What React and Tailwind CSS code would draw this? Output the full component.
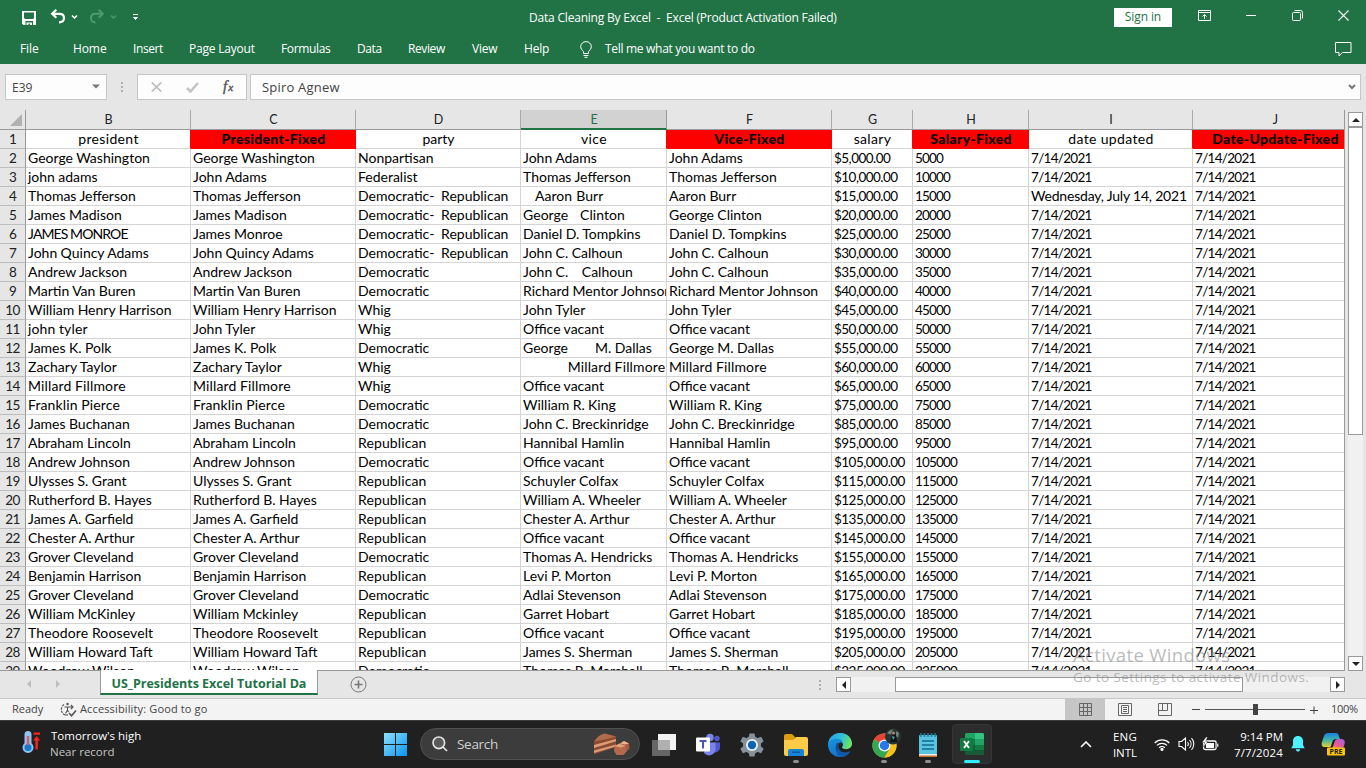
import React from "react";

const presidents = [
  ["George Washington", "George Washington", "Nonpartisan", "John Adams", "John Adams", "5,000"],
  ["john adams", "John Adams", "Federalist", "Thomas Jefferson", "Thomas Jefferson", "10,000"],
  ["Thomas Jefferson", "Thomas Jefferson", "Democratic-  Republican", "   Aaron Burr", "Aaron Burr", "15,000"],
  ["James Madison", "James Madison", "Democratic-  Republican", "George   Clinton", "George Clinton", "20,000"],
  ["JAMES MONROE", "James Monroe", "Democratic-  Republican", "Daniel D. Tompkins", "Daniel D. Tompkins", "25,000"],
  ["John Quincy Adams", "John Quincy Adams", "Democratic-  Republican", "John C. Calhoun", "John C. Calhoun", "30,000"],
  ["Andrew Jackson", "Andrew Jackson", "Democratic", "John C.    Calhoun", "John C. Calhoun", "35,000"],
  ["Martin Van Buren", "Martin Van Buren", "Democratic", "Richard Mentor Johnson", "Richard Mentor Johnson", "40,000"],
  ["William Henry Harrison", "William Henry Harrison", "Whig", "John Tyler", "John Tyler", "45,000"],
  ["john tyler", "John Tyler", "Whig", "Office vacant", "Office vacant", "50,000"],
  ["James K. Polk", "James K. Polk", "Democratic", "George        M. Dallas", "George M. Dallas", "55,000"],
  ["Zachary Taylor", "Zachary Taylor", "Whig", "             Millard Fillmore", "Millard Fillmore", "60,000"],
  ["Millard Fillmore", "Millard Fillmore", "Whig", "Office vacant", "Office vacant", "65,000"],
  ["Franklin Pierce", "Franklin Pierce", "Democratic", "William R. King", "William R. King", "75,000"],
  ["James Buchanan", "James Buchanan", "Democratic", "John C. Breckinridge", "John C. Breckinridge", "85,000"],
  ["Abraham Lincoln", "Abraham Lincoln", "Republican", "Hannibal Hamlin", "Hannibal Hamlin", "95,000"],
  ["Andrew Johnson", "Andrew Johnson", "Democratic", "Office vacant", "Office vacant", "105,000"],
  ["Ulysses S. Grant", "Ulysses S. Grant", "Republican", "Schuyler Colfax", "Schuyler Colfax", "115,000"],
  ["Rutherford B. Hayes", "Rutherford B. Hayes", "Republican", "William A. Wheeler", "William A. Wheeler", "125,000"],
  ["James A. Garfield", "James A. Garfield", "Republican", "Chester A. Arthur", "Chester A. Arthur", "135,000"],
  ["Chester A. Arthur", "Chester A. Arthur", "Republican", "Office vacant", "Office vacant", "145,000"],
  ["Grover Cleveland", "Grover Cleveland", "Democratic", "Thomas A. Hendricks", "Thomas A. Hendricks", "155,000"],
  ["Benjamin Harrison", "Benjamin Harrison", "Republican", "Levi P. Morton", "Levi P. Morton", "165,000"],
  ["Grover Cleveland", "Grover Cleveland", "Democratic", "Adlai Stevenson", "Adlai Stevenson", "175,000"],
  ["William McKinley", "William Mckinley", "Republican", "Garret Hobart", "Garret Hobart", "185,000"],
  ["Theodore Roosevelt", "Theodore Roosevelt", "Republican", "Office vacant", "Office vacant", "195,000"],
  ["William Howard Taft", "William Howard Taft", "Republican", "James S. Sherman", "James S. Sherman", "205,000"],
  ["Woodrow Wilson", "Woodrow Wilson", "Democratic", "Thomas R. Marshall", "Thomas R. Marshall", "225,000"],
];

const columns = [
  { letter: "B", w: "w-[165px]", title: "president" },
  { letter: "C", w: "w-[165px]", title: "President-Fixed", fixed: true },
  { letter: "D", w: "w-[165px]", title: "party" },
  { letter: "E", w: "w-[146px]", title: "vice" },
  { letter: "F", w: "w-[165px]", title: "Vice-Fixed", fixed: true },
  { letter: "G", w: "w-[81px]", title: "salary" },
  { letter: "H", w: "w-[116px]", title: "Salary-Fixed", fixed: true },
  { letter: "I", w: "w-[164px]", title: "date updated" },
  { letter: "J", w: "w-[165px]", title: "Date-Update-Fixed", fixed: true },
];

const rows = presidents.map((p, i) => [
  p[0], p[1], p[2], p[3], p[4],
  "$" + p[5] + ".00",
  p[5].replace(",", ""),
  i === 2 ? "Wednesday, July 14, 2021" : "7/14/2021",
  "7/14/2021",
]);

function textStyle(text, ci) {
  if (text.startsWith("Wednesday")) return " tracking-[-0.2px]";
  if (ci === 5) return " text-[13.5px] tracking-[-0.53px]";
  if (ci === 6) return " text-[13.5px] tracking-[-0.85px]";
  if (ci > 6) return " text-[13.5px] tracking-[-0.7px]";
  if (text === "JAMES MONROE") return " tracking-[-0.9px]";
  if (text === "john tyler" || text.endsWith("Millard Fillmore")) return " tracking-[0.15px] [word-spacing:-0.3px]";
  if (text === "   Aaron Burr") return " tracking-[0.05px] [word-spacing:0.5px]";
  if (text === "George   Clinton") return " tracking-[0.05px] [word-spacing:0.3px]";
  if (text === "Republican" || text.startsWith("Theodore") || text.startsWith("Franklin")) return " tracking-[0.12px]";
  return " tracking-[0px] [word-spacing:-0.2px]";
}

function TitleBar() {
  return (
    <div className="flex h-[34px] items-center text-[12px] text-white">
      <div className="flex w-[529px] shrink-0 items-center pl-[22px]">
        <svg width="14" height="14" viewBox="0 0 14 14" className="mt-px">
          <path d="M0 0h14v14H1.500L0 12.500z" fill="#fff" />
          <path d="M2 1.500h10V7l-1 1H3L2 7zM3.500 10h7.500v4H3.500z" fill="#217346" />
          <path d="M4.500 11.500h2V14h-2zM8 11.500h2V14H8zM4.500 11.500h5v1h-5z" fill="#fff" />
        </svg>
        <svg width="30" height="16" viewBox="0 0 30 16" className="ml-[14px]">
          <path d="M2 4.800h7.500c3 0 4.500 2 4.500 4.300s-1.700 4.300-5 4.300" fill="none" stroke="#fff" strokeWidth="2.200" />
          <path d="M6.300 .8 2.200 4.800l4.100 4" fill="none" stroke="#fff" strokeWidth="2.200" />
          <path d="m22 6.500 2.500 2.500L27 6.500" fill="none" stroke="#fff" strokeWidth="1.500" />
        </svg>
        <svg width="30" height="16" viewBox="0 0 30 16" className="ml-[9px]">
          <g fill="none" stroke="#4f9a70">
            <path d="M14 4.800H6.500C3.500 4.800 2 6.800 2 9.100s1.700 4.300 4.500 4.300" strokeWidth="2" />
            <path d="m9.700 .8 4.100 4-4.100 4" strokeWidth="2" />
            <path d="m22 6.500 2.500 2.500L27 6.500" strokeWidth="1.500" />
          </g>
        </svg>
        <svg width="7" height="8" viewBox="0 0 7 8" className="ml-[13px]">
          <path d="M1 1.500h5M1.500 4.500h4l-2 2z" fill="#fff" stroke="#fff" />
        </svg>
      </div>
      <span className="mt-[2px] whitespace-pre tracking-[-0.2px]">Data Cleaning By Excel  -  Excel (Product Activation Failed)</span>
      <div className="ml-auto flex items-center pr-[17px]">
        <div className="flex h-[19px] w-[58px] items-center justify-center bg-white text-[12px] tracking-[-0.1px] text-[#217346]">Sign in</div>
        <svg width="13" height="11" viewBox="0 0 13 11" className="ml-[26px] -mt-[3px]" fill="none" stroke="#fff">
          <path d="M.5.5h12v10H.5zM.5 2.500h12M6.500 9V4.500M4.500 6.500l2-2 2 2" />
        </svg>
        <div className="-mt-[4px] ml-[35px] h-px w-[10px] bg-white" />
        <svg width="11" height="11" viewBox="0 0 11 11" className="ml-[36px] -mt-[3px]" fill="none" stroke="#fff">
          <rect x=".5" y="2.500" width="8" height="8" rx="1" />
          <path d="M2.500 .5h6a2 2 0 0 1 2 2v6" />
        </svg>
        <svg width="11" height="11" viewBox="0 0 11 11" className="ml-[35px] -mt-[3px]" stroke="#fff" strokeWidth="1.100">
          <path d="m.5.5 10 10M10.500.5l-10 10" />
        </svg>
      </div>
    </div>
  );
}

function Menu() {
  return (
    <div className="flex h-[30px] items-center pl-[20px] text-[12px] leading-[30px] text-white">
      <span className="w-[53px] tracking-[-0.1px]">File</span>
      <span className="w-[60px] tracking-[-0.1px]">Home</span>
      <span className="w-[56px] tracking-[-0.4px]">Insert</span>
      <span className="w-[92px] tracking-[-0.2px]">Page Layout</span>
      <span className="w-[76px] tracking-[-0.35px]">Formulas</span>
      <span className="w-[51px] tracking-[-0.4px]">Data</span>
      <span className="w-[64px] tracking-[-0.4px]">Review</span>
      <span className="w-[52px] tracking-[-0.2px]">View</span>
      <span className="w-[56px] tracking-[-0.2px]">Help</span>
      <svg width="12" height="17" viewBox="0 0 12 17" fill="none" stroke="#fff">
        <path d="M3.500 12.500v-2C2 9 .7 7.600.7 5.600a5.300 5 0 0 1 10.600 0c0 2-1.300 3.400-2.800 4.900v2zM3.500 14.500h5M4.500 16.300h3" />
      </svg>
      <span className="ml-[13px] tracking-[-0.3px]">Tell me what you want to do</span>
      <svg width="17" height="15" viewBox="0 0 17 15" className="ml-auto mr-[14px]" fill="none" stroke="#fff">
        <path d="M.5.5h15.500v10H7.500l-3.500 3.500v-3.500H.5z" />
      </svg>
    </div>
  );
}

function FormulaBar() {
  return (
    <div className="flex h-[46px] items-start bg-[#e6e6e6] pl-[5px] pt-[10px] text-[13px] text-[#444]">
      <div className="flex h-[26px] w-[102px] items-center justify-between border border-[#c6c6c6] bg-[#fdfdfd] pl-[6px] pr-[6px]">
        <span className="mt-[2px] text-[12px]">E39</span>
        <svg width="8" height="5" viewBox="0 0 8 5" className="-mt-[2px]"><path d="M0 .5h8L4 4.500z" fill="#777" /></svg>
      </div>
      <div className="flex h-[26px] w-[30px] flex-col items-center justify-center gap-[2px]">
        <i className="h-[2px] w-[2px] bg-[#b0b0b0]" />
        <i className="h-[2px] w-[2px] bg-[#b0b0b0]" />
        <i className="h-[2px] w-[2px] bg-[#b0b0b0]" />
      </div>
      <div className="flex h-[26px] w-[110px] items-center border border-[#c6c6c6] bg-[#fdfdfd] pl-[13px]">
        <svg width="11" height="10" viewBox="0 0 11 10" stroke="#bdbdbd" strokeWidth="1.700"><path d="m.7.5 9.600 9M10.300.5l-9.600 9" /></svg>
        <svg width="13" height="11" viewBox="0 0 13 11" className="ml-[24px]" fill="none" stroke="#c3c3c3" strokeWidth="2.500"><path d="m1 6 3.500 3.500L12 1" /></svg>
        <span className="-mt-px ml-[24px] flex items-baseline font-['Liberation_Serif',serif] text-[15px] italic leading-[16px] text-[#555] [-webkit-text-stroke:0.4px_#555]">f<span className="ml-px text-[11px]">x</span></span>
      </div>
      <div className="ml-[3px] flex h-[26px] w-[1111px] items-center justify-between border border-[#c6c6c6] bg-[#fdfdfd] pl-[11px] pr-[4px]">
        <span className="mt-[2px] tracking-[0.2px]">Spiro Agnew</span>
        <svg width="8" height="6" viewBox="0 0 8 6" fill="none" stroke="#777" strokeWidth="2"><path d="m1 1 3 3 3-3" /></svg>
      </div>
    </div>
  );
}

function Sheet() {
  return (
    <div className="flex h-[560px] w-[1344px] flex-col overflow-hidden bg-white font-['Lato',sans-serif] text-[14px] leading-[18px] text-black">
      <div className="flex h-[20px] shrink-0">
        <div className="flex h-[20px] w-[26px] shrink-0 items-end justify-end border-b border-r border-[#999] bg-[#e6e6e6] pb-[3px] pr-[3px]">
          <svg width="12" height="12" viewBox="0 0 12 12"><path d="M12 0v12H0z" fill="#b1b1b1" /></svg>
        </div>
        {columns.map((c) => (
          <div
            key={c.letter}
            className={
              "h-[20px] shrink-0 pl-px text-center leading-[19px] text-[12.5px] " + c.w +
              (c.letter === "E"
                ? " border-r border-r-[#999] border-b-2 border-b-[#217346] bg-[#d2d2d2] text-[#217346]"
                : " border-b border-r border-b-[#999] border-r-[#a9a9a9] bg-[#e6e6e6] text-[#222]")
            }
          >
            {c.letter}
          </div>
        ))}
      </div>
      <div className="flex h-[19px] shrink-0">
        <RowNumber n={1} />
        {columns.map((c, i) => {
          const nextFixed = columns[i + 1] && columns[i + 1].fixed;
          return (
            <div
              key={c.letter}
              className={
                "h-[19px] shrink-0 whitespace-pre border-b border-r pl-px text-center " + c.w +
                (c.fixed
                  ? " border-[#f00] bg-[#f00] font-black tracking-[0.33px]"
                  : nextFixed
                    ? " border-b-[#d4d4d4] border-r-[#f00] tracking-[0.35px]"
                    : " border-[#d4d4d4]")
              }
            >
              {c.title}
            </div>
          );
        })}
      </div>
      {rows.map((r, ri) => (
        <div key={ri} className="flex h-[19px] shrink-0">
          <RowNumber n={ri + 2} />
          {r.map((text, ci) => (
            <div
              key={ci}
              className={
                "h-[19px] shrink-0 overflow-hidden whitespace-pre border-b border-r border-[#d4d4d4] pl-[2px] " +
                columns[ci].w + textStyle(text, ci)
              }
            >
              {text}
            </div>
          ))}
        </div>
      ))}
    </div>
  );
}

function RowNumber({ n }) {
  return (
    <div className="h-[19px] w-[26px] shrink-0 border-b border-r border-b-[#bdbdbd] border-r-[#999] bg-[#e6e6e6] text-center text-[13.5px] tracking-[-0.7px] text-[#222]">
      {n}
    </div>
  );
}

function VerticalScroll() {
  return (
    <div className="z-10 flex h-[561px] w-[22px] flex-col border-l border-[#999] bg-[#e6e6e6] pl-[3px] pt-[2px]">
      <div className="flex h-[15px] w-[15px] shrink-0 items-center justify-center border border-[#999] bg-white">
        <svg width="8" height="4" viewBox="0 0 8 4"><path d="M4 0l4 4H0z" fill="#222" /></svg>
      </div>
      <div className="h-[308px] w-[15px] shrink-0 border border-[#999] bg-white" />
      <div className="w-[15px] flex-1 bg-[#f1f1f1]" />
      <div className="flex h-[15px] w-[15px] shrink-0 items-center justify-center border border-[#999] bg-white">
        <svg width="8" height="4" viewBox="0 0 8 4"><path d="M0 0h8L4 4z" fill="#222" /></svg>
      </div>
    </div>
  );
}

function SheetTabs() {
  return (
    <div className="flex h-[28px] items-start border-t border-[#999] bg-[#e6e6e6]">
      <div className="flex h-[25px] w-[100px] items-center pl-[27px]">
        <svg width="4" height="8" viewBox="0 0 4 8"><path d="M4 0v8L0 4z" fill="#bdbdbd" /></svg>
        <svg width="4" height="8" viewBox="0 0 4 8" className="ml-[25px]"><path d="M0 0v8l4-4z" fill="#bdbdbd" /></svg>
      </div>
      <div className="-mt-px h-[25px] w-[218px] border-x border-b-2 border-x-[#999] border-b-[#217346] bg-white text-center text-[12.500px] font-bold leading-[27px] tracking-[-0.02px] text-[#217346]">
        US_Presidents Excel Tutorial Da
      </div>
      <svg width="17" height="17" viewBox="0 0 17 17" className="ml-[32px] mt-[5px]" fill="none" stroke="#777">
        <circle cx="8.500" cy="8.500" r="7.500" />
        <path d="M4.500 8.500h8M8.500 4.500v8" strokeWidth="1.600" />
      </svg>
      <div className="ml-auto flex items-center pt-[6px]">
        <div className="mr-[15px] flex flex-col gap-[2px]">
          <i className="h-[2px] w-[2px] bg-[#b0b0b0]" />
          <i className="h-[2px] w-[2px] bg-[#b0b0b0]" />
          <i className="h-[2px] w-[2px] bg-[#b0b0b0]" />
        </div>
        <div className="flex h-[15px] w-[15px] items-center justify-center border border-[#999] bg-white">
          <svg width="4" height="8" viewBox="0 0 4 8"><path d="M4 0v8L0 4z" fill="#222" /></svg>
        </div>
        <div className="h-[15px] w-[44px] bg-[#f1f1f1]" />
        <div className="h-[15px] w-[348px] border border-[#999] bg-white" />
        <div className="h-[15px] w-[87px] bg-[#f1f1f1]" />
        <div className="mr-[21px] flex h-[15px] w-[15px] items-center justify-center border border-[#999] bg-white">
          <svg width="4" height="8" viewBox="0 0 4 8"><path d="M0 0v8l4-4z" fill="#222" /></svg>
        </div>
      </div>
    </div>
  );
}

function StatusBar() {
  return (
    <div className="flex h-[22px] items-center border-t border-[#c6c6c6] bg-[#f3f3f3] pl-[12px] text-[11px] text-[#444]">
      <span className="w-[48px]">Ready</span>
      <svg width="17" height="15" viewBox="0 0 17 15" fill="none" stroke="#555" strokeWidth="1.100">
        <path d="M4 2.500A6 6 0 0 0 5 13" strokeDasharray="2.500 1" />
        <path d="M5 13h3" />
        <circle cx="7.500" cy="2" r=".7" />
        <path d="M4.500 5h8M11 3l2 2-2 2M7.500 5v3L5.500 11.500M7.500 8l1 2" />
        <path d="m9 11 2.500 2.800L16 8.500" strokeWidth="1.600" />
      </svg>
      <span className="ml-[3px] tracking-[0.14px]">Accessibility: Good to go</span>
      <div className="ml-auto flex h-full items-center">
        <div className="flex h-full w-[40px] items-center justify-center bg-[#c6c6c6]">
          <svg width="13" height="13" viewBox="0 0 13 13" fill="none" stroke="#666"><path d="M.5.5h12v12H.5zM.5 4.500h12M.5 8.500h12M4.500.5v12M8.500.5v12" /></svg>
        </div>
        <div className="flex w-[40px] justify-center">
          <svg width="14" height="13" viewBox="0 0 14 13" fill="none" stroke="#666"><path d="M.5.5h13v12H.5zM3.500 2.500h7v8h-7zM5 4.500h4M5 6.500h4M5 8.500h4" /></svg>
        </div>
        <div className="flex w-[40px] justify-center">
          <svg width="14" height="13" viewBox="0 0 14 13" fill="none" stroke="#666"><path d="M.5.5h13v12H.5zM4.500.5v7M9.500.5v7M.5 7.500h9" /></svg>
        </div>
        <div className="ml-[7px] h-px w-[8px] bg-[#444]" />
        <div className="ml-[5px] flex h-[11px] w-[100px] items-center">
          <i className="h-px w-[48px] bg-[#555]" />
          <i className="h-[11px] w-[5px] bg-[#444]" />
          <i className="h-px w-[47px] bg-[#555]" />
        </div>
        <svg width="8" height="8" viewBox="0 0 8 8" className="ml-[5px]" stroke="#444"><path d="M0 4.500h8M4 .5v8" /></svg>
        <span className="ml-[13px] w-[35px] tracking-[-0.3px]">100%</span>
      </div>
    </div>
  );
}

function AppSlot({ children, running }) {
  return (
    <div className="flex h-[40px] w-[44px] flex-col items-center pt-[8px]">
      <div className="flex h-[26px] items-center justify-center">{children}</div>
      {running && <i className="mt-[2px] h-[3px] w-[6px] rounded-full bg-[#8f8f8f]" />}
    </div>
  );
}

function Taskbar() {
  return (
    <div className="flex h-[48px] items-start border-t border-[#3c3c3c] bg-[#202020] pt-[3px] font-['Open_Sans','Noto_Sans',sans-serif] text-white">
      <div className="flex w-[384px] shrink-0 pl-[21px] pt-[6px]">
        <svg width="20" height="25" viewBox="0 0 20 25">
          <path d="M3.500 4.500a3.500 3.500 0 0 1 7 0v8.700a5.500 5.500 0 1 1-7 0z" fill="#8dc6f5" />
          <circle cx="7" cy="17.500" r="3.500" fill="#1879c9" />
          <path d="M5.800 6h2.400v9H5.800z" fill="#dc5a62" />
          <path d="M12.500 2.500H19v2.200h-6.500zM15.700 6l3.500 4.500h-2.300v9h-2.500v-9h-2.300z" fill="#f3251c" />
        </svg>
        <div className="-mt-[2px] ml-[10px] text-[11.500px] leading-[16px]">
          <div>Tomorrow's high</div>
          <div className="-ml-px text-[#c4c4c4]">Near record</div>
        </div>
      </div>
      <svg width="23" height="23" viewBox="0 0 23 23" className="mt-[9px]">
        <defs>
          <linearGradient id="win" x1="0" y1="0" x2="1" y2="1"><stop stopColor="#8be2fc" /><stop offset="1" stopColor="#0a93f2" /></linearGradient>
        </defs>
        <path d="M0 0h11v11H0zM12 0h11v11H12zM0 12h11v11H0zM12 12h11v11H12z" fill="url(#win)" />
      </svg>
      <div className="ml-[13px] mt-[4px] flex h-[32px] w-[220px] items-center rounded-full border border-[#505050] bg-[#3c3c3c] pl-[11px] pr-[9px]">
        <svg width="16" height="16" viewBox="0 0 16 16" fill="none" stroke="#e2e2e2" strokeWidth="1.700"><circle cx="6.800" cy="6.800" r="5.800" fill="#5a5a5a" /><path d="m11 11 4 4" /></svg>
        <span className="ml-[9px] text-[13.500px] tracking-[-0.3px] text-[#d0d0d0]">Search</span>
        <svg width="37" height="24" viewBox="0 0 37 24" className="ml-auto">
          <path d="M1 9.500 12 2l11 2.500V15L1 22.500z" fill="#8a4a32" />
          <path d="M1 9.500C4 5 8 2 12 1.500l11 3-11 3z" fill="#b06a4c" />
          <path d="m1 13 22-6v2.200L1 16zM1 18.500l22-6v2L1 21z" fill="#dc9c78" />
          <path d="m27 11.500 4-2.500 5 2.500.5 5L33 20l-5-1z" fill="#a75c3c" />
          <path d="m27 11.500 4-2.500 5 2.500-4 1z" fill="#e9b48f" />
          <path d="m21.500 14 5-2.500 6 2.500 1 5.500-3 3.500h-7l-2.500-4z" fill="#b4694a" />
          <path d="m21.500 14 5-2.500 6 2.500-5 1.500z" fill="#dda27f" />
        </svg>
      </div>
      <div className="ml-[2px] flex">
        <AppSlot>
          <svg width="24" height="22" viewBox="0 0 24 22">
            <path d="M6 0h18v16H6z" fill="#f2f2f2" /><path d="M0 6h18v16H0z" fill="#666" /><path d="M6 6h12v10H6z" fill="#b0b0b0" />
          </svg>
        </AppSlot>
        <AppSlot>
          <svg width="24" height="24" viewBox="0 0 24 24">
            <circle cx="14" cy="4.500" r="3.800" fill="#7b83eb" /><circle cx="21" cy="5.500" r="2.700" fill="#5059c9" />
            <path d="M17 9.500h7V15a5 5 0 0 1-7 4z" fill="#5059c9" /><path d="M10 9.500h9.500V16a6.500 6.500 0 0 1-11.500 4z" fill="#7b83eb" />
            <rect y="4.500" width="14" height="14" rx="1" fill="#fff" />
            <path d="M3.500 8h7M7 8v7.500" stroke="#4b53bc" strokeWidth="2" />
          </svg>
        </AppSlot>
        <AppSlot>
          <svg width="24" height="24" viewBox="0 0 24 24">
            <g fill="#87919b">
              <circle cx="12" cy="12" r="9" />
              <path d="M9.500.5h5l1 5h-7zM9.500 23.500h5l1-5h-7z" />
              <path d="M9.500 0h5l1 5h-7zM9.500 24h5l1-5h-7z" transform="rotate(60 12 12)" />
              <path d="M9.500 0h5l1 5h-7zM9.500 24h5l1-5h-7z" transform="rotate(120 12 12)" />
            </g>
            <circle cx="12" cy="12" r="6" fill="#eef3f7" /><circle cx="12" cy="12" r="4.200" fill="#0b65b5" />
          </svg>
        </AppSlot>
        <AppSlot running>
          <svg width="24" height="22" viewBox="0 0 24 22">
            <path d="M0 2a2 2 0 0 1 2-2h6l3 3-1 4H0z" fill="#dc9b10" />
            <path d="M0 6h9l3-3h10a2 2 0 0 1 2 2v15a2 2 0 0 1-2 2H2a2 2 0 0 1-2-2z" fill="#fdcb45" />
            <path d="M4 22v-5a2 2 0 0 1 2-2h12a2 2 0 0 1 2 2v5z" fill="#1684d8" /><path d="M8 17.500h8V19H8z" fill="#0b5b9f" />
          </svg>
        </AppSlot>
        <AppSlot>
          <svg width="24" height="24" viewBox="0 0 24 24">
            <defs>
              <linearGradient id="eg" x1="0" y1=".2" x2="1" y2=".5"><stop stopColor="#22a2e6" /><stop offset=".55" stopColor="#35c1d6" /><stop offset="1" stopColor="#6fe455" /></linearGradient>
              <linearGradient id="eb" x1="0" y1="0" x2=".4" y2="1"><stop stopColor="#1b9de2" /><stop offset="1" stopColor="#1272cc" /></linearGradient>
            </defs>
            <circle cx="12" cy="12" r="12" fill="url(#eb)" />
            <path d="M9.500 9.500C6.500 12 7 18 10.500 21c3.500 2.500 8.500 1 11-2.300C18 20.300 14.500 20 12 17.500 9.700 15.200 9.500 12.500 10.500 10.500z" fill="#0f4f9c" />
            <path d="M.3 10.500C1.200 4.500 6 0 12 0c7 0 12 4.800 12 10.500 0 3.500-2.500 5.700-5.700 5.700-2.800 0-4.300-1-4.300-2 0-.8 1-1.200 1-2.900C15 8 12.200 5.800 9 5.800c-4.300 0-7.500 2-8.700 4.700z" fill="url(#eg)" />
            <path d="M10.700 10.500c1.500-1.500 3.300-1 4.300.8 0 1.700-1 2.100-1 2.900 0 1 1.500 2 4.300 2 2.200 0 3.900-1 4.900-2.500l1.800-.2v5l-3.500.2c-3.500 1.800-7 1.300-9.200-1-2.300-2.200-2.600-5.200-1.600-7.200z" fill="#202020" />
            <path d="M10.700 16c1.500 3.500 6.500 4.600 10.400 2.500.7-.3 1 .2.600.7A12 12 0 0 1 13 24c-5-1-5-5-2.300-8z" fill="#115aab" />
          </svg>
        </AppSlot>
        <AppSlot running>
          <svg width="30" height="30" viewBox="0 0 30 30" className="-mt-[5px] ml-[5px] shrink-0">
            <circle cx="12.500" cy="17.500" r="12" fill="#ffd13e" />
            <path d="M12.500 17.500 2.100 11.500a12 12 0 0 1 20.800 0z" fill="#e94235" />
            <path d="M2.100 11.500A12 12 0 0 0 12.500 29.500l5.500-9-5.500-3z" fill="#32a853" />
            <path d="m12.500 29.500 5.500-9-.5-5.500h6.700a12 12 0 0 1-11.700 14.500z" fill="#fbc116" />
            <circle cx="12.500" cy="17.500" r="6" fill="#fff" /><circle cx="12.500" cy="17.500" r="4.700" fill="#2878e8" />
            <circle cx="21" cy="8.500" r="8" fill="#26352f" />
            <path d="M15 5.500c2-3 4-4 6-4l-2 5zM24 3l3 2-1 5-2-2z" fill="#72837a" />
            <path d="m18 14 2-6 2-3 2 2 1 7z" fill="#0e1116" /><path d="m20 8 1 4 2-3z" fill="#4ca2b0" />
            <circle cx="21.500" cy="5" r="1.500" fill="#a88778" />
          </svg>
        </AppSlot>
        <AppSlot running>
          <svg width="20" height="24" viewBox="0 0 20 24">
            <path d="M1 22h18v2H1z" fill="#c6722b" /><path d="M1 21h18v1.500H1z" fill="#f1eee9" />
            <rect x="1" y="2" width="18" height="19" rx="1" fill="#57c4e1" />
            <path d="M3 0v4M6.500 0v4M10 0v4M13.500 0v4M17 0v4" stroke="#1c7ba2" strokeWidth="1.500" />
            <path d="M4 8h12M4 12h12M4 16h12" stroke="#14688e" strokeWidth="1.600" />
          </svg>
        </AppSlot>
        <div className="flex h-[41px] w-[44px] justify-center">
          <div className="flex h-[40px] w-[40px] flex-col items-center rounded-[4px] border border-[#353535] bg-[#2d2d2d] pt-[8px]">
            <svg width="24" height="22" viewBox="0 0 24 22">
              <rect x="5" width="19" height="22" rx="1.500" fill="#185c37" />
              <path d="M5 1.500A1.500 1.500 0 0 1 6.500 0H15v6H5z" fill="#21a366" /><path d="M15 0h7.500A1.500 1.500 0 0 1 24 1.500V6h-9z" fill="#33c481" />
              <path d="M5 6h10v6H5z" fill="#107c41" /><path d="M15 6h9v6h-9z" fill="#21a366" /><path d="M15 12h9v5h-9z" fill="#107c41" />
              <rect y="5" width="13" height="13" rx="1" fill="#107c41" />
              <path d="m4 8 5 7M9 8l-5 7" stroke="#fff" strokeWidth="1.800" />
            </svg>
            <i className="mt-[5px] h-[3px] w-[16px] shrink-0 rounded-full bg-[#2cf0ff]" />
          </div>
        </div>
      </div>
      <div className="ml-auto flex h-[40px] items-center pr-[20px] text-[11.500px] leading-[16px]">
        <svg width="12" height="7" viewBox="0 0 12 7" fill="none" stroke="#fff" strokeWidth="1.600"><path d="m1 6 5-5 5 5" /></svg>
        <div className="ml-[20px] mt-[2px] w-[26px] text-center"><div className="tracking-[0.2px]">ENG</div><div>INTL</div></div>
        <svg width="16" height="13" viewBox="0 0 16 13" className="ml-[16px]" fill="none" stroke="#fff" strokeWidth="1.300">
          <path d="M.7 5a10.300 10.300 0 0 1 14.600 0M3 7.400a7 7 0 0 1 10 0M5.200 9.700a4 4 0 0 1 5.600 0" /><circle cx="8" cy="11.300" r="1" fill="#fff" />
        </svg>
        <svg width="17" height="14" viewBox="0 0 17 14" className="ml-[8px]" fill="none" stroke="#fff" strokeWidth="1.100">
          <path d="M1 4.500h2.500L7.500 1v12L3.500 9.500H1zM9.500 5a3 3 0 0 1 0 4M11.500 3a6 6 0 0 1 0 8M13.500 1.200a8.500 8.500 0 0 1 0 11.600" />
        </svg>
        <svg width="17" height="15" viewBox="0 0 17 15" className="ml-[7px]">
          <rect x="1.600" y="4" width="12.500" height="8.500" rx="1.500" fill="none" stroke="#fff" strokeWidth="1.300" />
          <path d="M4 6h8v5H4z" fill="#fff" />
          <path d="M15 6.500h1.500V10H15zM4 0 0 5.500h2.500L1.500 10 6 4.500H3.800L5.500 0z" fill="#fff" stroke="#202020" strokeWidth=".4" />
        </svg>
        <div className="ml-[10px] mt-[2px] w-[54px] whitespace-nowrap text-right"><div className="tracking-[-0.05px]">9:14 PM</div><div className="tracking-[0.15px]">7/7/2024</div></div>
        <svg width="14" height="16" viewBox="0 0 14 16" className="ml-[8px]" fill="#4cf2ff">
          <path d="M7 0c3 0 5 2.200 5 5v4l1.700 3.200H.3L2 9V5c0-2.800 2-5 5-5zM4.800 13.200h4.400C9 15 8 15.500 7 15.500S5 15 4.800 13.200z" />
        </svg>
        <svg width="25" height="24" viewBox="0 0 25 24" className="ml-[16px]">
          <defs>
            <linearGradient id="ca" x1="0" y1="0" x2="0" y2="1"><stop stopColor="#1b7fe5" /><stop offset=".5" stopColor="#3bb6a4" /><stop offset="1" stopColor="#e9d236" /></linearGradient>
            <linearGradient id="cb" x1="1" y1="0" x2="0" y2="1"><stop stopColor="#a45bf0" /><stop offset=".6" stopColor="#ec5c8c" /><stop offset="1" stopColor="#f9a04f" /></linearGradient>
          </defs>
          <path d="M7 1h8c2 0 2.500 1.500 3 3.500L19 7h-4c-2 0-3 1-3.500 2.500L9.500 15H4c-3 0-4-2-3-5l2-6c.7-2 2-3 4-3z" fill="url(#ca)" />
          <path d="M17 7h3c3 0 4.500 2 3.500 5l-1.500 5H9c2 0 2.600-1 3.200-3l1.300-4c.7-2 1.500-3 3.500-3z" fill="url(#cb)" />
          <rect x="6" y="15.500" width="18" height="8" rx="1" fill="#fdc60a" />
          <text x="15" y="22.200" textAnchor="middle" fontSize="7" fontWeight="700" fill="#222">PRE</text>
        </svg>
      </div>
    </div>
  );
}

export default function App() {
  return (
    <div className="relative flex h-[768px] w-[1366px] flex-col overflow-hidden bg-[#e6e6e6] font-['Open_Sans','Noto_Sans',sans-serif]">
      <div className="h-[64px] shrink-0 bg-[#217346]">
        <TitleBar />
        <Menu />
      </div>
      <FormulaBar />
      <div className="flex h-[560px] shrink-0">
        <Sheet />
        <VerticalScroll />
      </div>
      <SheetTabs />
      <StatusBar />
      <Taskbar />
      <div className="pointer-events-none absolute left-[1073px] top-[642px] whitespace-nowrap text-[#8c8c8c]/60">
        <div className="text-[18.500px] leading-[25px] tracking-[0.35px]">Activate Windows</div>
        <div className="text-[13.500px] leading-[20px] tracking-[0.43px]">Go to Settings to activate Windows.</div>
      </div>
    </div>
  );
}
